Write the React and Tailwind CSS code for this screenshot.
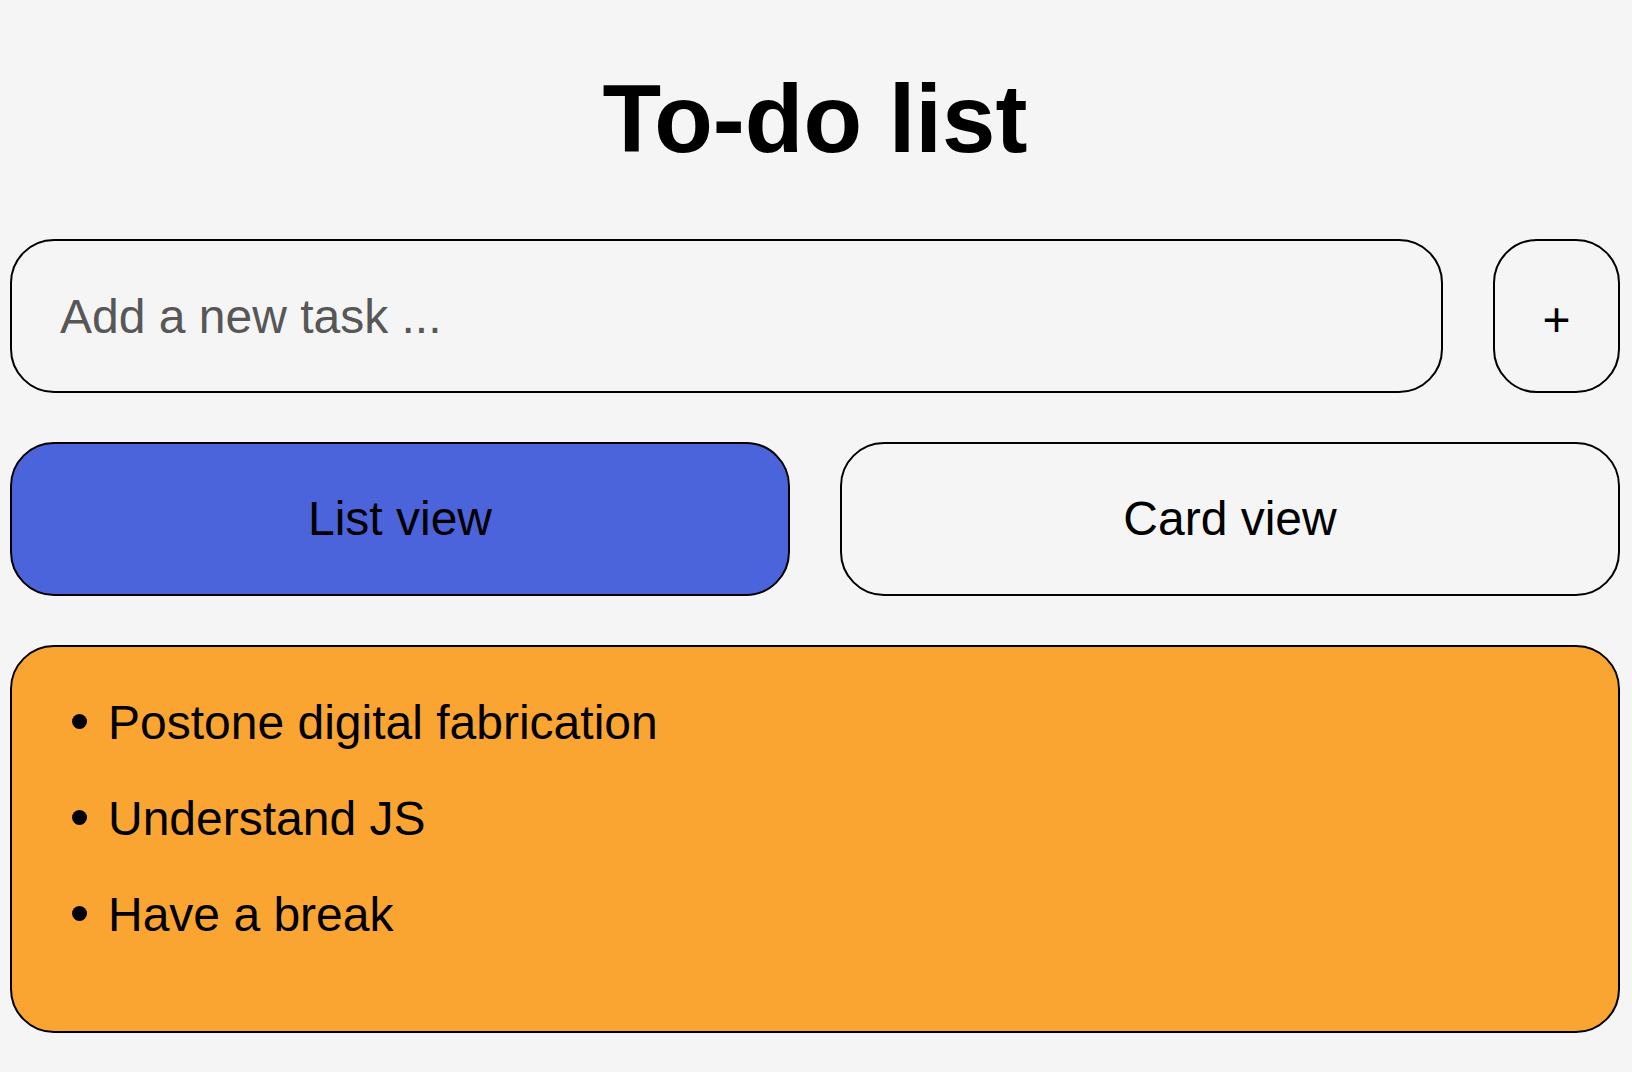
import { useState } from 'react'

const tasks = ['Postone digital fabrication', 'Understand JS', 'Have a break']

export default function App() {
  const [view, setView] = useState('list')
  const [text, setText] = useState('')

  return (
    <div className="min-h-screen bg-[#f5f5f5] pl-[10px] pr-[12px] pt-[71px] font-['Liberation_Sans',Arial,sans-serif] text-black">
      <h1 className="text-center text-[96px] font-bold leading-none">To-do list</h1>

      <div className="mt-[72px] flex gap-[50px]">
        <input
          value={text}
          onChange={(e) => setText(e.target.value)}
          placeholder="Add a new task ..."
          className="h-[154px] flex-1 rounded-[44px] border-2 border-black bg-[#f5f5f5] pl-[48px] text-[48px] outline-none placeholder:text-[#575757]"
        />
        <button className="h-[154px] w-[127px] rounded-[44px] border-2 border-black bg-[#f5f5f5] pt-[8px] text-[48px]">
          +
        </button>
      </div>

      <div className="mt-[49px] grid grid-cols-2 gap-[50px]">
        <button
          onClick={() => setView('list')}
          className={
            view === 'list'
              ? 'h-[154px] rounded-[44px] border-2 border-black bg-[#4c64db] text-[48px]'
              : 'h-[154px] rounded-[44px] border-2 border-black bg-[#f5f5f5] text-[48px]'
          }
        >
          List view
        </button>
        <button
          onClick={() => setView('card')}
          className={
            view === 'card'
              ? 'h-[154px] rounded-[44px] border-2 border-black bg-[#4c64db] text-[48px]'
              : 'h-[154px] rounded-[44px] border-2 border-black bg-[#f5f5f5] text-[48px]'
          }
        >
          Card view
        </button>
      </div>

      <ul className="mt-[49px] flex flex-col gap-[40px] rounded-[44px] border-2 border-black bg-[#faa532] pb-[88px] pl-[60px] pt-[48px]">
        {tasks.map((t) => (
          <li key={t} className="flex h-[56px] items-center text-[48px] leading-[56px]">
            <span className="mr-[21px] mt-[-4px] h-[15px] w-[15px] rounded-full bg-black" />
            {t}
          </li>
        ))}
      </ul>
    </div>
  )
}
